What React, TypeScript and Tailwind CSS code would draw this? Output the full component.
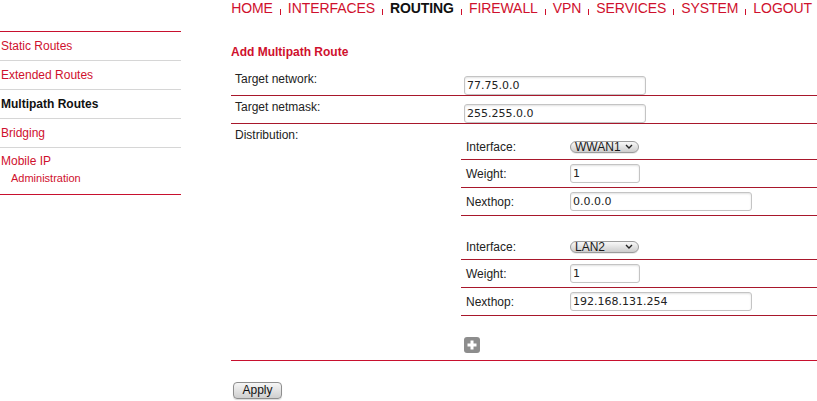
import React from "react";

const RED = "text-[#cf102d]";

function TextInput({ value, w }: { value: string; w: string }) {
  return (
    <input
      readOnly
      defaultValue={value}
      className={`${w} h-[19px] border border-[#c4c4c4] rounded-[3px] bg-white shadow-[inset_0_1px_2px_rgba(0,0,0,0.12)] px-[2px] text-[11px] font-['DejaVu_Sans',sans-serif] text-[#222] outline-none`}
    />
  );
}

function Pill({ value }: { value: string }) {
  return (
    <div className="w-[69px] h-[12px] rounded-full border border-[#9c9c9c] bg-linear-to-b from-[#f8f8f8] to-[#cdcdcd] flex items-center justify-between pl-[4px] pr-[5px] shadow-[0_1px_0_rgba(0,0,0,0.08)]">
      <span className="text-[12px] leading-[12px] text-[#1a1a1a]">{value}</span>
      <svg width="8" height="5" viewBox="0 0 8 5">
        <polyline points="1,1 4,4 7,1" fill="none" stroke="#222" strokeWidth="1.4" />
      </svg>
    </div>
  );
}

function SubRow({ label, children, top }: { label: string; children: React.ReactNode; top?: boolean }) {
  return (
    <div className={`flex items-center h-[28px] border-b border-[#a8172b] ${top ? "pt-[2px]" : ""}`}>
      <div className="w-[109px] pl-[5px] text-[12px] leading-[14px] text-[#222]">{label}</div>
      {children}
    </div>
  );
}

function Block({ iface, weight, nexthop }: { iface: string; weight: string; nexthop: string }) {
  return (
    <div>
      <SubRow label="Interface:" top>
        <Pill value={iface} />
      </SubRow>
      <SubRow label="Weight:">
        <TextInput value={weight} w="w-[70px]" />
      </SubRow>
      <SubRow label="Nexthop:">
        <TextInput value={nexthop} w="w-[182px]" />
      </SubRow>
    </div>
  );
}

function Sep() {
  return <span className="w-[1px] h-[6px] bg-[#cf102d] mx-[7px] mt-[9px]" />;
}

export default function App() {
  const nav = ["HOME", "INTERFACES", "ROUTING", "FIREWALL", "VPN", "SERVICES", "SYSTEM", "LOGOUT"];
  return (
    <div className="w-[817px] h-[401px] bg-white overflow-hidden font-['Liberation_Sans',Arial,sans-serif] text-[#222]">
      <nav className={`flex justify-end items-start h-[16px] pr-[5px] text-[14px] leading-[16px] tracking-[-0.08px] ${RED}`}>
        {nav.map((n, i) => (
          <React.Fragment key={n}>
            {i > 0 && <Sep />}
            <span className={n === "ROUTING" ? "font-bold text-[#111]" : ""}>{n}</span>
          </React.Fragment>
        ))}
      </nav>
      <div className="flex">
        <aside className="w-[181px] mt-[15px] border-t border-[#c8102e] text-[12px] leading-[14px]">
          <div className={`h-[29px] flex items-center border-b border-[#d6d6d6] pl-[1px] ${RED}`}>Static Routes</div>
          <div className={`h-[29px] flex items-center border-b border-[#d6d6d6] pl-[1px] ${RED}`}>Extended Routes</div>
          <div className="h-[29px] flex items-center border-b border-[#d6d6d6] pl-[1px] font-bold text-[#111]">Multipath Routes</div>
          <div className={`h-[29px] flex items-center border-b border-[#d6d6d6] pl-[1px] ${RED}`}>Bridging</div>
          <div className={`pt-[6px] pb-[9px] border-b border-[#c8102e] pl-[1px] ${RED}`}>
            <div>Mobile IP</div>
            <div className="mt-[3px] pl-[10px] text-[11px]">Administration</div>
          </div>
        </aside>
        <main className="ml-[50px] flex-1 mt-[29px]">
          <div className={`h-[14px] leading-[14px] text-[12px] font-bold ${RED} mb-[9px]`}>Add Multipath Route</div>
          <div className="flex items-start h-[28px] border-b border-[#a8172b] pt-[4px]">
            <div className="w-[230px] pl-[4px] text-[12px] leading-[14px]">Target network:</div>
            <div className="ml-[3px]">
              <TextInput value="77.75.0.0" w="w-[182px]" />
            </div>
          </div>
          <div className="flex items-start h-[28px] border-b border-[#a8172b] pt-[4px]">
            <div className="w-[230px] pl-[4px] text-[12px] leading-[14px]">Target netmask:</div>
            <div className="ml-[3px]">
              <TextInput value="255.255.0.0" w="w-[182px]" />
            </div>
          </div>
          <div className="flex items-start h-[237px] border-b border-[#c8102e]">
            <div className="w-[230px] pl-[4px] pt-[4px] text-[12px] leading-[14px]">Distribution:</div>
            <div className="flex-1 pt-[8px]">
              <Block iface="WWAN1" weight="1" nexthop="0.0.0.0" />
              <div className="mt-[16px]">
                <Block iface="LAN2" weight="1" nexthop="192.168.131.254" />
              </div>
              <div className="mt-[21px] ml-[3px] w-[16px] h-[16px] rounded-[3px] bg-[#8d8d8d] flex items-center justify-center">
                <svg width="10" height="10" viewBox="0 0 10 10">
                  <rect x="3.5" y="0.5" width="3" height="9" fill="#fff" />
                  <rect x="0.5" y="3.5" width="9" height="3" fill="#fff" />
                </svg>
              </div>
            </div>
          </div>
          <button className="mt-[21px] ml-[2px] w-[49px] h-[17px] rounded-[4px] border border-[#8e8e8e] bg-linear-to-b from-[#f6f6f6] to-[#cfcfcf] text-[12px] leading-[15px] text-[#111] shadow-[0_1px_1px_rgba(0,0,0,0.15)]">
            Apply
          </button>
        </main>
      </div>
    </div>
  );
}
